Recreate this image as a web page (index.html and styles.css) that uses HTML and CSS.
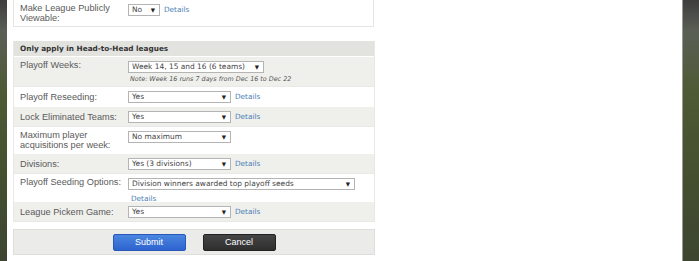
FILE: index.html
```html
<!DOCTYPE html>
<html>
<head>
<meta charset="utf-8">
<link rel="stylesheet" href="styles.css">
</head>
<body>
<div class="page">
  <div class="box top-box">
    <div class="row white">
      <div class="label">Make League Publicly Viewable:</div>
      <div class="value"><div class="line"><span class="sel w-no">No<span class="arr">▼</span></span><a class="link">Details</a></div></div>
    </div>
  </div>

  <div class="box h2h">
    <div class="head">Only apply in Head-to-Head leagues</div>
    <div class="row gray r30">
      <div class="label">Playoff Weeks:</div>
      <div class="value">
        <div class="line"><span class="sel w-weeks">Week 14, 15 and 16 (6 teams)<span class="arr">▼</span></span></div>
        <div class="note">Note: Week 16 runs 7 days from Dec 16 to Dec 22</div>
      </div>
    </div>
    <div class="row white r20">
      <div class="label">Playoff Reseeding:</div>
      <div class="value"><div class="line"><span class="sel w-std">Yes<span class="arr">▼</span></span><a class="link">Details</a></div></div>
    </div>
    <div class="row gray r20">
      <div class="label">Lock Eliminated Teams:</div>
      <div class="value"><div class="line"><span class="sel w-std">Yes<span class="arr">▼</span></span><a class="link">Details</a></div></div>
    </div>
    <div class="row white r27">
      <div class="label">Maximum player acquisitions per week:</div>
      <div class="value"><div class="line"><span class="sel w-std">No maximum<span class="arr">▼</span></span></div></div>
    </div>
    <div class="row gray r20">
      <div class="label">Divisions:</div>
      <div class="value"><div class="line"><span class="sel w-std">Yes (3 divisions)<span class="arr">▼</span></span><a class="link">Details</a></div></div>
    </div>
    <div class="row white r28">
      <div class="label">Playoff Seeding Options:</div>
      <div class="value">
        <div class="line"><span class="sel w-wide">Division winners awarded top playoff seeds<span class="arr">▼</span></span></div>
        <div class="line2"><a class="link nomargin">Details</a></div>
      </div>
    </div>
    <div class="row gray r20">
      <div class="label">League Pickem Game:</div>
      <div class="value"><div class="line"><span class="sel w-std">Yes<span class="arr">▼</span></span><a class="link">Details</a></div></div>
    </div>
  </div>

  <div class="box buttons">
    <button class="btn submit">Submit</button>
    <button class="btn cancel">Cancel</button>
  </div>
</div>
</body>
</html>
```
FILE: styles.css
```css
html, body {
  margin: 0;
  padding: 0;
  height: 261px;
  overflow: hidden;
}
body {
  background: linear-gradient(to bottom, #3e3e3e 0%, #5a5f55 12%, #4e5a35 35%, #465230 60%, #3d4530 100%);
  padding: 0 17px 0 7px;
  font-family: "Liberation Sans", Arial, sans-serif;
}
.page {
  background: #fff;
  height: 261px;
  padding-left: 6px;
  box-shadow: 1px 0 0 #9a9a96;
}
.box {
  width: 362px;
  box-sizing: border-box;
}
.top-box {
  border: 1px solid #e4e4e2;
  border-top: none;
  height: 27px;
  width: 361px;
}
.top-box .row {
  border-top: none;
}
.top-box .label {
  padding-top: 3px;
}
.top-box .value {
  padding-top: 3px;
}
.h2h {
  margin-top: 14px;
  border: 1px solid #e8e8e6;
  border-top: none;
}
.head {
  background: #e2e2df;
  height: 15px;
  line-height: 15px;
  padding-left: 6px;
  font-family: "DejaVu Sans", Verdana, sans-serif;
  font-weight: bold;
  font-size: 7.3px;
  color: #333;
}
.row {
  display: flex;
  box-sizing: border-box;
  border-top: 1px solid #fff;
}
.row.gray { background: #efefec; }
.row.white { background: #fff; border-top-color: #e9e9e7; }
.r20 { height: 20px; }
.r27 { height: 27px; }
.r28 { height: 28px; }
.r30 { height: 30px; }
.label {
  width: 114px;
  padding-left: 6px;
  padding-top: 3px;
  font-size: 9.2px;
  line-height: 10px;
  color: #5a5a5a;
  flex: none;
  box-sizing: border-box;
}
.r20 .label { padding-top: 5px; }
.value {
  padding-top: 3px;
}
.line {
  display: flex;
  align-items: center;
  height: 13px;
}
.sel {
  position: relative;
  display: inline-block;
  box-sizing: border-box;
  height: 12px;
  line-height: 10px;
  border: 1px solid #b4b4b4;
  background: #fff;
  font-family: "DejaVu Sans", Verdana, sans-serif;
  font-size: 7.45px;
  color: #444;
  padding-left: 3px;
  white-space: nowrap;
}
.arr {
  position: absolute;
  right: 4px;
  top: 0;
  font-size: 5.5px;
  line-height: 10px;
  color: #222;
}
.w-no { width: 32px; }
.w-weeks { width: 136px; }
.w-std { width: 103px; }
.w-wide { width: 227px; }
.link {
  font-family: "DejaVu Sans", Verdana, sans-serif;
  font-size: 7.3px;
  color: #4a7fb5;
  margin-left: 4px;
}
.link.nomargin { margin-left: 3px; }
.note {
  font-family: "DejaVu Sans", Verdana, sans-serif;
  font-style: italic;
  font-size: 6.4px;
  color: #555;
  margin-top: 2px;
  padding-left: 2px;
}
.line2 {
  margin-top: 1px;
  line-height: 10px;
}
.buttons {
  margin-top: 7px;
  height: 26px;
  background: #ebebe9;
  border: 1px solid #dededc;
  display: flex;
  justify-content: center;
  align-items: center;
  gap: 17px;
}
.btn {
  width: 73px;
  height: 17px;
  border: none;
  border-radius: 2px;
  font-family: "Liberation Sans", Arial, sans-serif;
  font-size: 9px;
  color: #fff;
  padding: 0;
}
.submit {
  background: linear-gradient(to bottom, #4a86e0, #2d63cf);
  border: 1px solid #2a58b8;
}
.cancel {
  background: linear-gradient(to bottom, #454545, #2e2e2e);
  border: 1px solid #222;
}
```
